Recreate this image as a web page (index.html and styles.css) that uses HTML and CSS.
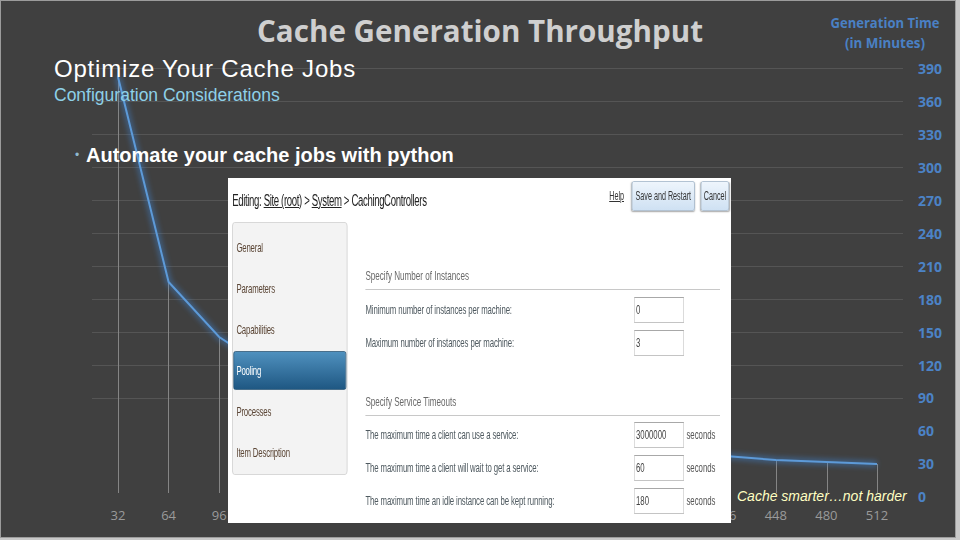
FILE: index.html
```html
<!DOCTYPE html>
<html lang="en">
<head>
    <meta charset="UTF-8">
    <meta name="viewport" content="width=device-width, initial-scale=1.0">
    <title>Optimize Your Cache Jobs</title>
    <link rel="stylesheet" href="styles.css">
</head>
<body>
    <div class="slide">
        <!-- background chart picture -->
        <svg class="chart" width="956" height="538" viewBox="0 0 956 538">
            <defs>
                <filter id="glow" x="-10%" y="-10%" width="120%" height="120%">
                    <feGaussianBlur stdDeviation="2.5"/>
                </filter>
            </defs>
            <text class="chart-title" x="480" y="42" text-anchor="middle" textLength="446" lengthAdjust="spacingAndGlyphs">Cache Generation Throughput</text>
            <text class="axis-title" x="885" y="28" text-anchor="middle" textLength="109" lengthAdjust="spacingAndGlyphs">Generation Time</text>
            <text class="axis-title" x="885" y="48" text-anchor="middle" textLength="80" lengthAdjust="spacingAndGlyphs">(in Minutes)</text>

            <g stroke="#555555" stroke-width="1">
                <line x1="92" y1="68.5" x2="903" y2="68.5"/>
                <line x1="92" y1="101.5" x2="903" y2="101.5"/>
                <line x1="92" y1="134.5" x2="903" y2="134.5"/>
                <line x1="92" y1="167.5" x2="903" y2="167.5"/>
                <line x1="92" y1="200.5" x2="903" y2="200.5"/>
                <line x1="92" y1="233.5" x2="903" y2="233.5"/>
                <line x1="92" y1="266.5" x2="903" y2="266.5"/>
                <line x1="92" y1="299.5" x2="903" y2="299.5"/>
                <line x1="92" y1="332.5" x2="903" y2="332.5"/>
                <line x1="92" y1="365.5" x2="903" y2="365.5"/>
                <line x1="92" y1="398.5" x2="903" y2="398.5"/>
            </g>

            <g stroke="#858585" stroke-width="1">
                <line x1="118.5" y1="77" x2="118.5" y2="493"/>
                <line x1="168.5" y1="282" x2="168.5" y2="493"/>
                <line x1="219.5" y1="337" x2="219.5" y2="493"/>
                <line x1="725.5" y1="456" x2="725.5" y2="493"/>
                <line x1="776.5" y1="460" x2="776.5" y2="493"/>
                <line x1="827.5" y1="462" x2="827.5" y2="493"/>
                <line x1="877.5" y1="464" x2="877.5" y2="493"/>
            </g>

            <polyline class="line-glow" filter="url(#glow)" points="118,77 168.6,282 219.2,337 269.8,370 320.4,392 371,408 421.6,420 472.2,429 522.8,436 573.4,442 624,447 674.6,451 725.2,456 775.8,460 826.4,462 877,464"/>
            <polyline class="line" points="118,77 168.6,282 219.2,337 269.8,370 320.4,392 371,408 421.6,420 472.2,429 522.8,436 573.4,442 624,447 674.6,451 725.2,456 775.8,460 826.4,462 877,464"/>

            <g class="y-labels">
                <text x="918" y="74">390</text>
                <text x="918" y="107">360</text>
                <text x="918" y="140">330</text>
                <text x="918" y="173">300</text>
                <text x="918" y="206">270</text>
                <text x="918" y="239">240</text>
                <text x="918" y="272">210</text>
                <text x="918" y="305">180</text>
                <text x="918" y="338">150</text>
                <text x="918" y="371">120</text>
                <text x="918" y="403">90</text>
                <text x="918" y="436">60</text>
                <text x="918" y="469">30</text>
                <text x="918" y="502">0</text>
            </g>

            <!-- labels 128 to 384 sit under the pasted screenshot -->
            <g class="x-labels" text-anchor="middle">
                <text x="118" y="520">32</text>
                <text x="168.6" y="520">64</text>
                <text x="219.2" y="520">96</text>
                <text x="725.2" y="520">416</text>
                <text x="775.8" y="520">448</text>
                <text x="826.4" y="520">480</text>
                <text x="877" y="520">512</text>
            </g>
        </svg>

        <div class="content">
            <h1>Optimize Your Cache Jobs</h1>
            <h2>Configuration Considerations</h2>
            <ul class="bullets">
                <li>Automate your cache jobs with python</li>
            </ul>

            <div class="shot">
                <div class="shot-inner">
                    <div class="shot-head">
                        <div class="crumbs">Editing: <a href="#">Site (root)</a> &gt; <a href="#">System</a> &gt; CachingControllers</div>
                        <a href="#" class="help">Help</a>
                        <button class="sbtn save">Save and Restart</button>
                        <button class="sbtn cancel">Cancel</button>
                    </div>
                    <div class="shot-body">
                        <div class="tabs">
                            <div class="tab">General</div>
                            <div class="tab">Parameters</div>
                            <div class="tab">Capabilities</div>
                            <div class="tab active">Pooling</div>
                            <div class="tab">Processes</div>
                            <div class="tab">Item Description</div>
                        </div>
                        <div class="form">
                            <div class="sec-title">Specify Number of Instances</div>
                            <div class="rows">
                                <div class="row">
                                    <label>Minimum number of instances per machine:</label>
                                    <input type="text" value="0">
                                </div>
                                <div class="row">
                                    <label>Maximum number of instances per machine:</label>
                                    <input type="text" value="3">
                                </div>
                            </div>
                            <div class="sec-title second">Specify Service Timeouts</div>
                            <div class="rows tight">
                                <div class="row">
                                    <label>The maximum time a client can use a service:</label>
                                    <input type="text" value="3000000">
                                    <span class="unit">seconds</span>
                                </div>
                                <div class="row">
                                    <label>The maximum time a client will wait to get a service:</label>
                                    <input type="text" value="60">
                                    <span class="unit">seconds</span>
                                </div>
                                <div class="row">
                                    <label>The maximum time an idle instance can be kept running:</label>
                                    <input type="text" value="180">
                                    <span class="unit">seconds</span>
                                </div>
                            </div>
                        </div>
                    </div>
                </div>
            </div>
        </div>

        <div class="tagline">Cache smarter…not harder</div>
    </div>
</body>
</html>
```

FILE: styles.css
```css
body {
    margin: 0;
    background: #c8c8c8;
    font-family: "Liberation Sans", Arial, sans-serif;
}

.slide {
    position: relative;
    width: 956px;
    height: 538px;
    background: #404040;
    box-shadow: inset 0 0 0 1px #9c9c9c;
    overflow: hidden;
}

.chart {
    position: absolute;
    top: 0;
    left: 0;
}

.chart-title {
    font-family: "Open Sans", sans-serif;
    font-weight: bold;
    font-size: 31px;
    fill: #cfcfcf;
}

.axis-title {
    font-family: "Open Sans", sans-serif;
    font-weight: bold;
    font-size: 14px;
    fill: #4a80c4;
}

.line {
    fill: none;
    stroke: #5d9ad8;
    stroke-width: 2;
}

.line-glow {
    fill: none;
    stroke: #3f86d6;
    stroke-width: 7;
    opacity: 0.4;
}

.y-labels text {
    font-family: "Open Sans", sans-serif;
    font-weight: bold;
    font-size: 14px;
    fill: #4c83c6;
}

.x-labels text {
    font-family: "Open Sans", sans-serif;
    font-size: 13px;
    fill: #9a9a9a;
}

.content {
    position: relative;
    padding: 55px 0 0 54px;
}

h1 {
    margin: 0;
    font-size: 24px;
    line-height: 28px;
    letter-spacing: 0.8px;
    font-weight: normal;
    color: #ffffff;
}

h2 {
    margin: 2px 0 0;
    font-size: 17.5px;
    line-height: 20px;
    font-weight: normal;
    color: #8ed0e8;
}

.bullets {
    margin: 38px 0 0;
    padding: 0 0 0 21px;
    list-style: none;
}

.bullets li {
    display: flex;
    font-size: 20px;
    line-height: 24px;
    font-weight: bold;
    color: #ffffff;
}

.bullets li::before {
    content: "•";
    width: 11px;
    font-size: 12px;
    font-weight: normal;
    color: #8fb8d0;
}

/* screenshot of the admin page, squeezed like the pasted picture */
.shot {
    margin: 11px 0 0 174px;
    width: 503px;
    height: 345px;
    background: #ffffff;
    overflow: hidden;
}

.shot-inner {
    width: 838px;
    height: 345px;
    box-sizing: border-box;
    padding: 3px 3px 0 7px;
    transform: scaleX(0.6);
    transform-origin: 0 0;
}

.shot-head {
    display: flex;
    align-items: flex-start;
    height: 32px;
}

.crumbs {
    flex: 1;
    margin-top: 11px;
    font-size: 16px;
    line-height: 18px;
    letter-spacing: -0.6px;
    color: #222;
}

.crumbs a,
.help {
    color: #222;
    text-decoration: underline;
}

.help {
    margin: 8px 13px 0 0;
    font-size: 12px;
    color: #333;
}

.sbtn {
    height: 30px;
    padding: 0;
    font-family: "Liberation Sans", Arial, sans-serif;
    font-size: 12px;
    color: #333;
    border: 1px solid #9fb4c8;
    border-radius: 3px;
    background: linear-gradient(#eef5fc, #cfe1f3);
    box-shadow: 0 1px 2px rgba(0,0,0,0.35);
}

.save {
    width: 105px;
}

.cancel {
    width: 47px;
    margin-left: 10px;
}

.shot-body {
    display: flex;
    gap: 30px;
    margin-top: 9px;
}

.tabs {
    width: 192px;
    height: 253px;
    box-sizing: border-box;
    padding-top: 4px;
    background: #f3f3f3;
    border: 1px solid #cfcfcf;
    border-radius: 4px;
}

.tab {
    height: 41px;
    display: flex;
    align-items: center;
    padding-left: 6px;
    font-size: 13px;
    letter-spacing: -0.3px;
    color: #5b4636;
}

.tab.active {
    height: 39px;
    margin: 1px 1px;
    padding-left: 4px;
    box-sizing: border-box;
    color: #ffffff;
    border: 1px solid #1d4d70;
    border-radius: 3px;
    background: linear-gradient(#4f90be, #1f5883);
}

.form {
    flex: 1;
    padding-right: 15px;
}

.sec-title {
    margin-top: 44px;
    padding-bottom: 3px;
    font-size: 13.5px;
    line-height: 20px;
    color: #6a6a6a;
    border-bottom: 1px solid #c8c8c8;
}

.sec-title.second {
    margin-top: 33px;
}

.rows {
    margin-top: 3px;
}

.rows.tight {
    margin-top: 2px;
}

.row {
    display: flex;
    align-items: center;
    height: 33px;
}

.row label {
    width: 448px;
    font-size: 13px;
    letter-spacing: -0.2px;
    color: #4f5a60;
}

.row input {
    width: 83px;
    height: 26px;
    box-sizing: border-box;
    padding: 0 2px;
    font-family: "Liberation Sans", Arial, sans-serif;
    font-size: 13px;
    color: #444;
    border: 1px solid #c4c4c4;
    border-top-color: #a8a8a8;
}

.unit {
    margin-left: 4px;
    font-size: 13px;
    color: #555;
}

.tagline {
    position: absolute;
    left: 737px;
    top: 488px;
    font-size: 14px;
    font-style: italic;
    color: #ffffc2;
}
```
